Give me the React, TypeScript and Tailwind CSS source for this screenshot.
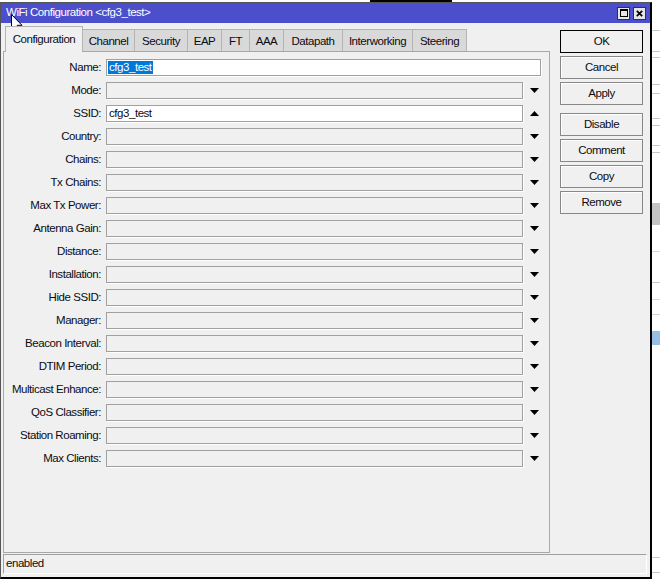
import React from "react";

const TABS: { label: string; w: string; active?: boolean }[] = [
  { label: "Configuration", w: "w-[78px]", active: true },
  { label: "Channel", w: "w-[52px]" },
  { label: "Security", w: "w-[53px]" },
  { label: "EAP", w: "w-[34px]" },
  { label: "FT", w: "w-[28px]" },
  { label: "AAA", w: "w-[34px]" },
  { label: "Datapath", w: "w-[59px]" },
  { label: "Interworking", w: "w-[70px]" },
  { label: "Steering", w: "w-[54px]" },
];

type Field = { label: string; kind: "name" | "ssid" | "combo" };

const FIELDS: Field[] = [
  { label: "Name", kind: "name" },
  { label: "Mode", kind: "combo" },
  { label: "SSID", kind: "ssid" },
  { label: "Country", kind: "combo" },
  { label: "Chains", kind: "combo" },
  { label: "Tx Chains", kind: "combo" },
  { label: "Max Tx Power", kind: "combo" },
  { label: "Antenna Gain", kind: "combo" },
  { label: "Distance", kind: "combo" },
  { label: "Installation", kind: "combo" },
  { label: "Hide SSID", kind: "combo" },
  { label: "Manager", kind: "combo" },
  { label: "Beacon Interval", kind: "combo" },
  { label: "DTIM Period", kind: "combo" },
  { label: "Multicast Enhance", kind: "combo" },
  { label: "QoS Classifier", kind: "combo" },
  { label: "Station Roaming", kind: "combo" },
  { label: "Max Clients", kind: "combo" },
];

const BUTTONS = [["OK", "Cancel", "Apply"], ["Disable", "Comment", "Copy", "Remove"]];

// bits of the list window lying behind the dialog, top to bottom: [height, colour class]
const BEHIND: [string, string][] = [
  ["h-[28px]", "bg-white"],
  ["h-[1px]", "bg-[#c8c8c8]"],
  ["h-[20px]", "bg-white"],
  ["h-[1px]", "bg-[#c8c8c8]"],
  ["h-[5px]", "bg-white"],
  ["h-[1px]", "bg-[#c8c8c8]"],
  ["h-[26px]", "bg-white"],
  ["h-[1px]", "bg-[#c8c8c8]"],
  ["h-[8px]", "bg-white"],
  ["h-[1px]", "bg-[#c8c8c8]"],
  ["h-[24px]", "bg-white"],
  ["h-[1px]", "bg-[#c8c8c8]"],
  ["h-[6px]", "bg-white"],
  ["h-[1px]", "bg-[#c8c8c8]"],
  ["h-[19px]", "bg-white"],
  ["h-[1px]", "bg-[#c8c8c8]"],
  ["h-[6px]", "bg-white"],
  ["h-[1px]", "bg-[#c8c8c8]"],
  ["h-[50px]", "bg-white"],
  ["h-[22px]", "bg-[#c4c4c4]"],
  ["h-[26px]", "bg-white"],
  ["h-[1px]", "bg-[#d8d8d8]"],
  ["h-[30px]", "bg-white"],
  ["h-[1px]", "bg-[#c8c8c8]"],
  ["h-[16px]", "bg-white"],
  ["h-[1px]", "bg-[#d8d8d8]"],
  ["h-[14px]", "bg-white"],
  ["h-[1px]", "bg-[#d8d8d8]"],
  ["h-[16px]", "bg-white"],
  ["h-[14px]", "bg-[#99bfe9]"],
  ["h-[212px]", "bg-white"],
  ["h-[1px]", "bg-[#c8c8c8]"],
  ["h-[14px]", "bg-white"],
  ["h-[1px]", "bg-[#c8c8c8]"],
];

function Arrow({ up }: { up?: boolean }) {
  return (
    <svg width="9" height="5" viewBox="0 0 9 5">
      <polygon points={up ? "4.5,0 9,5 0,5" : "0,0 9,0 4.5,5"} fill="#000" />
    </svg>
  );
}

function FieldRow({ field }: { field: Field }) {
  const box = "h-[17px] border border-[#a0a0a0] shadow-[1px_1px_0_#ffffff]";
  return (
    <div className="flex h-[17px] items-center">
      <span className="w-[97px] shrink-0 text-right">{field.label}:</span>
      {field.kind === "name" ? (
        <div className={`ml-[5px] flex w-[435px] items-center bg-white pl-[1px] ${box}`}>
          <span className="bg-[#0078d7] px-[1px] leading-[13px] text-white">cfg3_test</span>
        </div>
      ) : (
        <>
          <div
            className={`ml-[5px] flex w-[417px] items-center pl-[2px] ${box} ${
              field.kind === "ssid" ? "bg-white" : "bg-[#f0f0f0]"
            }`}
          >
            {field.kind === "ssid" ? "cfg3_test" : null}
          </div>
          <div className="flex w-[23px] items-center justify-center">
            <Arrow up={field.kind === "ssid"} />
          </div>
        </>
      )}
    </div>
  );
}

function Cursor() {
  return (
    <svg className="absolute left-[11px] top-[14px]" width="12" height="19" viewBox="0 0 12 19">
      <path
        d="M0.5 0.5 L0.5 15.5 L4 12 L6.5 17.8 L8.6 16.9 L6.2 11.3 L11 11.3 Z"
        fill="#fff"
        stroke="#000"
        strokeWidth="1"
        strokeLinejoin="miter"
      />
    </svg>
  );
}

export default function App() {
  return (
    <div className="relative flex h-[581px] w-[660px] flex-col overflow-hidden bg-white font-['Liberation_Sans',Arial,sans-serif] text-[11.5px] tracking-[-0.45px] text-[#0b0b14]">
      <div className="flex h-[2px] shrink-0">
        <div className="ml-[370px] h-[2px] w-[82px] bg-black" />
      </div>

      <div className="flex min-h-0 flex-1">
        {/* dialog window */}
        <div className="flex h-[577px] w-[652px] shrink-0 flex-col border-b-2 border-l border-r-2 border-t border-b-black border-l-[#555] border-r-black border-t-[#555] bg-[#f0f0f0]">
          <div className="flex h-[20px] shrink-0 items-center bg-[#4b4fcc] pl-[5px] pr-[4px] text-white">
            <span className="flex-1">WiFi Configuration &lt;cfg3_test&gt;</span>
            <div className="flex gap-[3px]">
              <div className="flex h-[13px] w-[13px] items-center justify-center border border-[#333] bg-[#e6e6e6]">
                <div className="h-[8px] w-[8px] border border-t-2 border-black" />
              </div>
              <div className="flex h-[13px] w-[13px] items-center justify-center border border-[#333] bg-[#e6e6e6]">
                <svg width="7" height="7" viewBox="0 0 7 7">
                  <path d="M0.8 0.8 L6.2 6.2 M6.2 0.8 L0.8 6.2" stroke="#000" strokeWidth="1.7" />
                </svg>
              </div>
            </div>
          </div>

          <div className="flex min-h-0 flex-1">
            <div className="flex flex-col pl-[2px]">
              <div className="flex h-[28px] shrink-0 items-end pl-[2px] pt-[3px]">
                {TABS.map((tab) =>
                  tab.active ? (
                    <div
                      key={tab.label}
                      className={`relative z-10 -mb-[1px] flex h-[26px] items-center justify-center border border-b-0 border-[#b4b4b4] bg-[#f0f0f0] ${tab.w}`}
                    >
                      {tab.label}
                    </div>
                  ) : (
                    <div
                      key={tab.label}
                      className={`flex h-[22px] items-center justify-center border border-b-0 border-l-0 border-[#b4b4b4] bg-[#d9d9d9] pt-[2px] ${tab.w}`}
                    >
                      {tab.label}
                    </div>
                  )
                )}
              </div>
              <div className="flex w-[547px] flex-1 flex-col gap-[6px] border border-[#a8a8a8] pt-[7px]">
                {FIELDS.map((field) => (
                  <FieldRow key={field.label} field={field} />
                ))}
              </div>
            </div>

            <div className="ml-[10px] flex w-[83px] flex-col gap-[8px] pt-[7px]">
              {BUTTONS.map((group, gi) => (
                <div key={gi} className="flex flex-col gap-[3px]">
                  {group.map((label) => (
                    <div
                      key={label}
                      className={`flex h-[23px] items-center justify-center bg-[#f0f0f0] ${
                        label === "OK"
                          ? "border-[1.5px] border-black"
                          : "border border-[#878787] shadow-[inset_1px_1px_0_#ffffff]"
                      }`}
                    >
                      {label}
                    </div>
                  ))}
                </div>
              ))}
            </div>
          </div>

          <div className="mb-[3px] ml-[2px] mr-[3px] mt-[1px] flex h-[20px] shrink-0 items-center border border-b-white border-l-[#a0a0a0] border-r-white border-t-[#a0a0a0] pl-[2px]">
            enabled
          </div>
        </div>

        {/* list window behind */}
        <div className="flex flex-1 flex-col">
          {BEHIND.map(([h, c], i) => (
            <div key={i} className={`${h} ${c} shrink-0`} />
          ))}
        </div>
      </div>

      <Cursor />
    </div>
  );
}
